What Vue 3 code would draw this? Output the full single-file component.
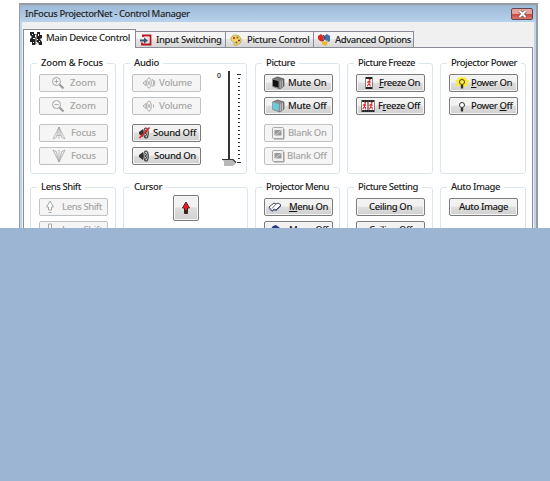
<script setup>
const tabs = [
  { label: 'Main Device Control', icon: 'film', w: 113, gap: 3, text: 84, active: true },
  { label: 'Input Switching', icon: 'input', w: 90, gap: 3, text: 65.500 },
  { label: 'Picture Control', icon: 'palette', w: 88, gap: 4, text: 62.500 },
  { label: 'Advanced Options', icon: 'blocks', w: 100, gap: 4, text: 76 },
]

// c: centre of the icon, x: start of the label, w: label width, key: index of the access key
const rows = [
  [
    { title: 'Zoom & Focus', w: 62, buttons: [
      { label: 'Zoom', icon: 'zoomin', c: 17.5, x: 31, w: 26, off: true },
      { label: 'Zoom', icon: 'zoomout', c: 17.5, x: 31, w: 26, off: true },
      { label: 'Focus', icon: 'focusup', c: 18.5, x: 32, w: 25, off: true },
      { label: 'Focus', icon: 'focusdown', c: 18.5, x: 32, w: 25, off: true },
    ] },
    { title: 'Audio', w: 25, slider: true, buttons: [
      { label: 'Volume', icon: 'volup', c: 16, x: 27, w: 33, off: true },
      { label: 'Volume', icon: 'voldown', c: 16, x: 27, w: 33, off: true },
      { label: 'Sound Off', icon: 'soundoff', c: 11, x: 21, w: 43 },
      { label: 'Sound On', icon: 'sound', c: 11, x: 22, w: 42 },
    ] },
    { title: 'Picture', w: 29, buttons: [
      { label: 'Mute On', icon: 'muteon', c: 13, x: 24, w: 38.5 },
      { label: 'Mute Off', icon: 'muteoff', c: 13, x: 24, w: 38.5 },
      { label: 'Blank On', icon: 'blank', c: 12.5, x: 24, w: 38.5, off: true },
      { label: 'Blank Off', icon: 'blank', c: 12.5, x: 23, w: 39.5, off: true },
    ] },
    { title: 'Picture Freeze', w: 57, buttons: [
      { label: 'Freeze On', icon: 'freezeon', c: 11.5, x: 23, w: 41, key: 0 },
      { label: 'Freeze Off', icon: 'freezeoff', c: 10.5, x: 22, w: 42, key: 1 },
    ] },
    { title: 'Projector Power', w: 66, buttons: [
      { label: 'Power On', icon: 'poweron', c: 11.5, x: 22, w: 41, key: 0 },
      { label: 'Power Off', icon: 'bulb', c: 11.5, x: 22, w: 41.5, key: 6 },
    ] },
  ],
  [
    { title: 'Lens Shift', w: 40, buttons: [
      { label: 'Lens Shift', icon: 'lensup', c: 10, x: 23, w: 40, off: true },
      { label: 'Lens Shift', icon: 'lensdown', c: 10, x: 23, w: 40, off: true },
    ] },
    { title: 'Cursor', w: 28, cursor: true, buttons: [] },
    { title: 'Projector Menu', w: 63, buttons: [
      { label: 'Menu On', icon: 'menu', c: 10, x: 25, w: 39, key: 0 },
      { label: 'Menu Off', icon: 'menuoff', c: 10, x: 25, w: 39 },
    ] },
    { title: 'Picture Setting', w: 60, buttons: [
      { label: 'Ceiling On', x: 13, w: 43 },
      { label: 'Ceiling Off', x: 13, w: 43 },
    ] },
    { title: 'Auto Image', w: 49, buttons: [{ label: 'Auto Image', x: 10, w: 49 }] },
  ],
]

const ticks = Array.from({ length: 23 }, (_, i) => i)

// Adjusts the tracking so that a label fills the given width.
const vFit = {
  mounted(el, { value }) {
    const width = el.getBoundingClientRect().width
    el.style.letterSpacing = `${(value - width) / el.textContent.trim().length}px`
  },
}
</script>

<template>
  <div class="desktop">
    <svg class="defs" width="0" height="0">
      <symbol id="film" viewBox="0 0 14 16">
        <path d="M1 2h4v2h3V2h3v3h2v3l-2 1 2 3v3h-3l-1-3-3 3H3v-3H1V9l2-2-2-2z" fill="#222" />
        <path d="M3 4h1v1H3zM6 5h1v2H6zM9 4h1v2H9zM4 8h2v1H4zM8 9h1v1H8zM4 12h1v1H4zM10 11h1v1h-1zM7 12h1v1H7z" fill="#fff" />
        <path d="M7 1v14" stroke="#fff" stroke-width=".8" />
      </symbol>
      <symbol id="input" viewBox="0 0 14 16">
        <path d="M4 5V3.500h7.500v9H3v-2" fill="none" stroke="#b91422" stroke-width="1.800" />
        <path d="M5 5.500h4.500v5" fill="none" stroke="#f2dada" stroke-width="1.400" />
        <path d="M1 7.500h4V5.500l4 3-4 3V9.500H1z" fill="#42506e" />
      </symbol>
      <symbol id="palette" viewBox="0 0 14 16">
        <path d="M2 6c1-4 9-4 10 1 1 4-3 7-7 6-1-1 1-2 0-3S1 9 2 6z" fill="#f6d867" stroke="#b89b49" stroke-width=".8" />
        <circle cx="5" cy="6" r="1.200" fill="#d64235" /><circle cx="8.500" cy="5.500" r="1.100" fill="#6a7939" />
        <circle cx="10" cy="8.500" r="1.100" fill="#9f3434" /><circle cx="7.500" cy="10.500" r="1.100" fill="#666" />
      </symbol>
      <symbol id="blocks" viewBox="0 0 14 16">
        <path d="M1 4l3-2 3 3-1 5-3-1-2-2z" fill="#d82920" />
        <path d="M7 4l3-2 3 2v5l-2 1-4-3z" fill="#426fae" />
        <path d="M5 9l3 1 3-2-1 5-2 1-3-2z" fill="#e7ba28" />
        <path d="M6 3l2 3-2 3" fill="none" stroke="#36384d" />
      </symbol>
      <symbol id="zoomin" viewBox="0 0 14 14">
        <circle cx="5.500" cy="5.500" r="4" fill="none" stroke="#a6a6a6" /><path d="M3.500 5.500h4M5.500 3.500v4" stroke="#aaa" />
        <path d="M8.500 8.500l4 4" stroke="#999" stroke-width="2" />
      </symbol>
      <symbol id="zoomout" viewBox="0 0 14 14">
        <circle cx="5.500" cy="5.500" r="4" fill="none" stroke="#a6a6a6" /><path d="M3.500 5.500h4" stroke="#aaa" />
        <path d="M8.500 8.500l4 4" stroke="#999" stroke-width="2" />
      </symbol>
      <symbol id="focusup" viewBox="0 0 14 14">
        <path d="M1 13L7 1l6 12-3-1.500M1 13l3-1.500M7 1v12M4 12L7 1l3 11M5 9.500h4" fill="none" stroke="#a8a8a8" stroke-width=".75" />
      </symbol>
      <symbol id="focusdown" viewBox="0 0 14 14">
        <path d="M1 1l6 12 6-12-3 1.500M1 1l3 1.500M7 1v12M4 2l3 11 3-11" fill="none" stroke="#a0a0a0" stroke-width=".75" />
      </symbol>
      <symbol id="volup" viewBox="0 0 14 14">
        <path d="M4 4.500L1 7l3 2.500zM7 2C4 2 4 12 7 12s3-10 0-10zM7 5v4M6 7h2M10 3c2 2 2 6 0 8M12 4c1 2 1 4 0 6" fill="none" stroke="#ababab" />
      </symbol>
      <symbol id="voldown" viewBox="0 0 14 14">
        <path d="M4 4.500L1 7l3 2.500zM7 2C4 2 4 12 7 12s3-10 0-10zM7 5v4M6 7h2M11.500 5.500v3" fill="none" stroke="#ababab" />
      </symbol>
      <symbol id="sound" viewBox="0 0 14 14">
        <path d="M6 3L2 6v2l4 3z" fill="#333" />
        <path d="M9 2C6 2 6 12 9 12s3-10 0-10z" fill="#ccc" stroke="#333" stroke-width="1.100" />
        <path d="M8 4.500c2 0 2 2.500 0 2.500 2 0 2 3 0 3" fill="none" stroke="#222" />
      </symbol>
      <symbol id="soundoff" viewBox="0 0 14 14">
        <use href="#sound" /><path d="M2.500 12L12.500 1.500" stroke="#ee1d22" stroke-width="1.700" />
      </symbol>
      <symbol id="muteon" viewBox="0 0 14 14">
        <path d="M1.500 3l5-2 6.500 2v7l-4 3-7-2.500z" fill="#777" stroke="#333" stroke-width=".6" />
        <path d="M1.500 3l6.500 1.800v7.500l-6.500-2z" fill="#111" stroke="#999" stroke-width=".8" /><path d="M9.700 4.500v8M11.500 3.800v7.500" stroke="#bbb" stroke-width=".8" />
      </symbol>
      <symbol id="muteoff" viewBox="0 0 14 14">
        <path d="M1.500 3l5-2 6.500 2v7l-4 3-7-2.500z" fill="#888" stroke="#444" stroke-width=".6" />
        <path d="M1.500 3l6.500 1.800v7.500l-6.500-2z" fill="#65cfe0" stroke="#999" stroke-width=".8" /><path d="M9.700 4.500v8M11.500 3.800v7.500" stroke="#ccc" stroke-width=".8" />
      </symbol>
      <symbol id="blank" viewBox="0 0 14 14">
        <rect x="1.500" y="1.500" width="11" height="11" rx="1" fill="#f0f0f0" stroke="#aaa" />
        <path d="M13 3v10H3" fill="none" stroke="#999" /><rect x="3.500" y="4" width="7" height="5.500" fill="#999" /><path d="M4 9.500l6-5" stroke="#ddd" stroke-width=".8" />
      </symbol>
      <symbol id="runner" viewBox="0 0 6 10">
        <circle cx="3.800" cy="1.500" r="1.100" fill="#e5282b" />
        <path d="M3.500 3L2.800 6l1.500 1v2M2.800 6L1 8.500M1 4.500L3.300 3l1.500 1.500" fill="none" stroke="#e5282b" stroke-width="1.200" />
      </symbol>
      <symbol id="freezeon" viewBox="0 0 14 14">
        <rect x="3.500" y="1" width="7" height="12" fill="#222" /><rect x="4" y="3" width="6" height="8" fill="#fff" />
        <use href="#runner" x="4" y="2.500" width="6" height="9" />
      </symbol>
      <symbol id="freezeoff" viewBox="0 0 14 14">
        <rect x=".5" y="1" width="13" height="12" fill="#222" /><path d="M1 3h5.500v8H1zM7.500 3H13v8H7.500z" fill="#fff" />
        <path d="M1 2h12M1 12h12" stroke="#999" stroke-width=".5" stroke-dasharray="1 1" />
        <use href="#runner" x=".5" y="2.500" width="6" height="9" /><use href="#runner" x="7" y="2.500" width="6" height="9" />
      </symbol>
      <symbol id="bulb" viewBox="0 0 14 14">
        <circle cx="7" cy="6" r="2.500" fill="#fff" stroke="#333" /><path d="M5.800 9h2.400v3H5.800z" fill="#333" /><path d="M7 12v1" stroke="#333" />
      </symbol>
      <symbol id="poweron" viewBox="0 0 14 14">
        <path d="M7 0l1.300 2L11 1l.3 2.500L14 4.500 12.500 7l1 2.500-3 .5L7 11l-3.500-1-3-.5L2 7 0 4.500l2.700-1L3 1l2.700 1z" fill="#ffeb2f" />
        <circle cx="7" cy="6" r="2.500" fill="#fff14f" stroke="#443d17" /><path d="M5.800 9h2.400v3.500H5.800z" fill="#333" />
      </symbol>
      <symbol id="lensup" viewBox="0 0 14 14"><path d="M7 1L3.500 7h2v3h3V7h2zM5.500 12.500h3" fill="#fff" stroke="#a6a6a6" /></symbol>
      <symbol id="lensdown" viewBox="0 0 14 14"><path d="M7 13L3.500 7h2V1h3v6h2z" fill="#fff" stroke="#a6a6a6" /></symbol>
      <symbol id="menu" viewBox="0 0 14 14">
        <path d="M1 7l5-4 2 1 2-1 3 2-5 5-2-1-2 2z" fill="#fff" stroke="#30384f" stroke-width=".9" />
        <path d="M1 8.500L4 11.500l2-1.500 2 1 5-5" fill="none" stroke="#5b678d" stroke-width=".9" /><path d="M8 4L4 8.500" stroke="#777" />
      </symbol>
      <symbol id="menuoff" viewBox="0 0 14 14"><path d="M2 7l3-4 3-1 4 3-3 7H5z" fill="#263b82" /></symbol>
    </svg>

    <main class="window">
      <header class="titlebar">
        <span class="caption"><span v-fit="164.5">InFocus ProjectorNet - Control Manager</span></span>
        <button class="close" aria-label="Close">
          <svg width="9" height="8" viewBox="0 0 9 8"><path d="M1.500 1l6 6M7.500 1l-6 6" stroke="#6d4a50" stroke-width="3.200" /><path d="M1.500 1l6 6M7.500 1l-6 6" stroke="#fff" stroke-width="1.900" /></svg>
        </button>
      </header>
      <nav class="tabs">
        <div v-for="t in tabs" :key="t.label" class="tab" :class="{ active: t.active }" :style="{ width: t.w + 'px' }">
          <svg class="tab-icon"><use :href="'#' + t.icon" /></svg>
          <span v-fit="t.text" :style="{ marginLeft: t.gap + 'px' }">{{ t.label }}</span>
        </div>
      </nav>
      <section class="page">
        <div v-for="(row, r) in rows" :key="r" class="row">
          <fieldset v-for="g in row" :key="g.title" class="group">
            <legend><span v-fit="g.w">{{ g.title }}</span></legend>
            <div class="buttons">
              <button v-for="(b, i) in g.buttons" :key="i" class="btn" :class="{ off: b.off }" :disabled="b.off">
                <span class="icon-cell" :style="{ width: (b.icon ? b.c * 2 : 0) + 'px' }">
                  <svg v-if="b.icon" class="icon"><use :href="'#' + b.icon" /></svg>
                </span>
                <span v-fit="b.w" :style="{ marginLeft: b.x - 1 - (b.icon ? b.c * 2 : 0) + 'px' }"><template v-if="b.key !== undefined">{{ b.label.slice(0, b.key) }}<u>{{ b.label[b.key] }}</u>{{ b.label.slice(b.key + 1) }}</template><template v-else>{{ b.label }}</template></span>
              </button>
            </div>
            <div v-if="g.slider" class="slider">
              <span class="zero">0</span>
              <svg width="22" height="98" viewBox="0 0 22 98">
                <rect x="6" y="0" width="2" height="90" fill="#333" />
                <path d="M1 89h10l3 3-3 3H2v-4z" fill="#b8b8b8" /><path d="M0 88.500h11l3 3" fill="none" stroke="#333" stroke-width="1.200" />
                <rect v-for="t in ticks" :key="t" :x="t % 22 ? 16 : 15" :y="3 + t * 4" :width="t % 22 ? 2 : 4" height="1" fill="#333" />
              </svg>
            </div>
            <button v-if="g.cursor" class="btn arrow" aria-label="Up">
              <svg width="10" height="14" viewBox="0 0 10 14"><path d="M5 1L1.500 7h2v5.500h3V7h2z" fill="#3b2020" stroke="#3b2020" /><path d="M5 1.500L2 7h2v2h2V7h2z" fill="#f01820" /></svg>
            </button>
          </fieldset>
        </div>
      </section>
    </main>
  </div>
</template>

<style>
body { margin: 0; background: #9bb5d3; }
</style>

<style scoped>
.desktop { width: 550px; height: 228px; overflow: hidden; background: #fff; padding: 3px 0 0 19px; box-sizing: border-box; font: 500 9.5px/14px "Noto Sans", "Open Sans", sans-serif; color: #222; white-space: nowrap; }
.defs { position: absolute; }
.window { width: 519px; height: 260px; box-sizing: border-box; border: solid #979da2; border-width: 2px 2px 0 1px; background: linear-gradient(90deg, #bdd4eb 0 2px, #f0f0f0 2px 514px, #bdd4eb 514px); display: flex; flex-direction: column; }
.titlebar { flex: none; height: 17px; background: linear-gradient(#9bb9d7, #b9d2ec); display: flex; justify-content: space-between; align-items: center; padding: 0 3px 0 5px; }
.titlebar span { display: inline-block; }
.close { width: 22px; height: 12px; box-sizing: border-box; padding: 0; border: 1px solid #65454d; border-radius: 2px; background: linear-gradient(#e5a39c 0 45%, #c64638 50%, #d9776b); display: flex; align-items: center; justify-content: center; }
.tabs { height: 25px; flex: none; display: flex; align-items: flex-end; padding-left: 3px; }
.tab { height: 16px; box-sizing: border-box; display: flex; align-items: center; border: 1px solid #898c95; border-width: 1px 1px 0 0; background: linear-gradient(#f4f4f4 45%, #e5e5e5 50%, #d6d6d6); padding-left: 3px; }
.tab.active { height: 19px; margin-bottom: -1px; background: #fff; border-left-width: 1px; padding: 0 0 2px 5px; position: relative; }
.tab-icon { width: 14px; height: 16px; flex: none; }
.tab span { flex: none; }
.page { flex: 1; width: 510px; box-sizing: border-box; margin-left: 3px; border: solid #898c95; border-width: 1px 1px 0; background: #fff; padding: 8px 6px 0; }
.row { display: grid; grid-template-columns: 86px 125px 85px 86px 86px; gap: 7px; height: 124px; }
.group { position: relative; min-width: 0; margin: 0; padding: 0; height: 118px; border: 1px solid #dbe5ec; border-radius: 3px; box-sizing: border-box; display: flex; }
.row:first-child .group:nth-child(2) { margin-right: 1px; }
legend { height: 14px; margin-left: 6px; padding: 0 4px; line-height: 14px; }
legend span { display: inline-block; }
.buttons { display: grid; grid-template-rows: 18px 18px 18px 18px; row-gap: 5px; padding: 4px 0 0 8px; align-content: start; }
.buttons .btn:nth-child(3) { margin-top: 4px; }
.buttons .btn:nth-child(4) { margin-top: 4px; }
.btn { width: 69px; height: 18px; box-sizing: border-box; padding: 0; border: 1px solid #7b7b7b; border-radius: 2px; background: linear-gradient(#f2f2f2 0 45%, #dedede 50%, #d0d0d0); box-shadow: inset 0 0 0 1px #f6f6f6; font: inherit; color: #151515; display: flex; align-items: center; }
.btn > span { flex: none; margin-top: -1px; }
.btn.off { color: #a5a5a5; background: #f5f5f5; border-color: #bfc2c4; box-shadow: none; }
.icon-cell { display: flex; justify-content: center; }
.icon { width: 14px; height: 14px; flex: none; }
u { text-underline-offset: 1px; text-decoration-thickness: 1px; }
.slider { display: flex; align-items: flex-start; margin: 1px 0 0 16px; }
.zero { font-size: 7px; line-height: 9px; width: 5px; }
.arrow { width: 26px; height: 26px; margin: 1px 0 0 41px; justify-content: center; }
</style>
